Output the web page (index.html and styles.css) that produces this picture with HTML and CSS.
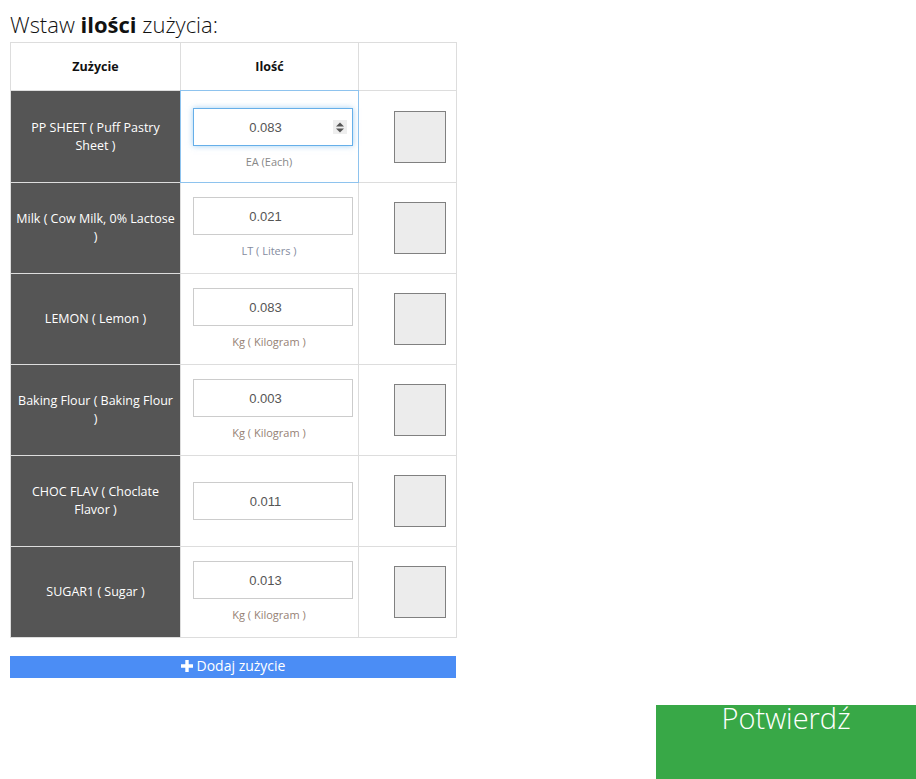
FILE: index.html
```html
<!DOCTYPE html>
<html lang="pl">
<head>
<meta charset="utf-8">
<title>Wstaw ilości zużycia</title>
<link rel="stylesheet" href="styles.css">
</head>
<body>
<div class="page">
  <div class="content">
    <h2 class="title">Wstaw <b>ilości</b> zużycia:</h2>
    <table class="usage">
      <thead>
        <tr>
          <th class="c-name">Zużycie</th>
          <th class="c-qty">Ilość</th>
          <th class="c-chk"></th>
        </tr>
      </thead>
      <tbody>
        <tr class="first">
          <td class="name">PP SHEET ( Puff Pastry Sheet )</td>
          <td class="qty focused">
            <div class="field focus"><input type="text" value="0.083"><span class="spin"><svg width="8" height="11" viewBox="0 0 8 11"><path d="M0 4.5 L4 0.5 L8 4.5 Z M0 6.5 L4 10.5 L8 6.5 Z" fill="#555"/></svg></span></div>
            <div class="unit u-ea">EA (Each)</div>
          </td>
          <td class="chk"><span class="box"></span></td>
        </tr>
        <tr>
          <td class="name">Milk ( Cow Milk, 0% Lactose )</td>
          <td class="qty">
            <div class="field"><input type="text" value="0.021"></div>
            <div class="unit u-lt">LT ( Liters )</div>
          </td>
          <td class="chk"><span class="box"></span></td>
        </tr>
        <tr>
          <td class="name">LEMON ( Lemon )</td>
          <td class="qty">
            <div class="field"><input type="text" value="0.083"></div>
            <div class="unit u-kg">Kg ( Kilogram )</div>
          </td>
          <td class="chk"><span class="box"></span></td>
        </tr>
        <tr>
          <td class="name">Baking Flour ( Baking Flour )</td>
          <td class="qty">
            <div class="field"><input type="text" value="0.003"></div>
            <div class="unit u-kg">Kg ( Kilogram )</div>
          </td>
          <td class="chk"><span class="box"></span></td>
        </tr>
        <tr>
          <td class="name">CHOC FLAV ( Choclate Flavor )</td>
          <td class="qty">
            <div class="field"><input type="text" value="0.011"></div>
          </td>
          <td class="chk"><span class="box"></span></td>
        </tr>
        <tr>
          <td class="name">SUGAR1 ( Sugar )</td>
          <td class="qty">
            <div class="field"><input type="text" value="0.013"></div>
            <div class="unit u-kg">Kg ( Kilogram )</div>
          </td>
          <td class="chk"><span class="box"></span></td>
        </tr>
      </tbody>
    </table>
    <button class="add" type="button"><svg class="plus" width="12" height="12" viewBox="0 0 12 12"><path d="M4.3 0 H7.7 V4.3 H12 V7.7 H7.7 V12 H4.3 V7.7 H0 V4.3 H4.3 Z" fill="#fff"/></svg>Dodaj zużycie</button>
  </div>
  <div class="actions">
    <button class="confirm" type="button">Potwierdź</button>
  </div>
</div>
</body>
</html>
```
FILE: styles.css
```css
* { box-sizing: border-box; }
html, body { margin: 0; padding: 0; background: #fff; }
body {
  font-family: "Open Sans", "Liberation Sans", sans-serif;
  color: #222;
  width: 916px;
  height: 779px;
  overflow: hidden;
}
.page { padding-top: 9px; }
.content { padding-left: 10px; width: 456px; }
.title {
  margin: 0 0 2px 0;
  font-size: 22px;
  font-weight: 300;
  line-height: 31px;
  color: #111;
}
.title b { font-weight: 700; }

.usage {
  border-collapse: collapse;
  width: 446px;
  table-layout: fixed;
}
.usage th, .usage td {
  border: 1px solid #ddd;
  padding: 0;
}
.c-name { width: 170px; }
.c-qty { width: 178px; }
.c-chk { width: 98px; }
.usage th {
  height: 48px;
  font-size: 12.5px;
  font-weight: 700;
  color: #111;
  text-align: center;
  vertical-align: middle;
}
.usage td { height: 91px; vertical-align: middle; }
.usage tr.first td { height: 92px; }
.name {
  background: #555555;
  color: #fff;
  font-size: 12.5px;
  line-height: 18px;
  text-align: center;
  padding: 0 4.5px !important;
}
.qty { text-align: center; }
.qty.focused {
  border: 1px double #8ec3ee !important;
  padding-top: 5px !important;
}
.field {
  position: relative;
  width: 160px;
  margin-left: 12px;
}
.field input {
  display: block;
  width: 160px;
  height: 38px;
  border: 1px solid #ccc;
  background: #fff;
  padding: 0 27px 0 12px;
  text-align: center;
  font-family: "Liberation Sans", Arial, sans-serif;
  font-size: 13px;
  color: #555;
  outline: none;
}
.field.focus input {
  border-color: #66afe9;
  box-shadow: 0 0 6px rgba(102, 175, 233, 0.6);
}
.spin {
  position: absolute;
  right: 6px;
  top: 12px;
  width: 14px;
  height: 14px;
  background: #eee;
  display: flex;
  align-items: center;
  justify-content: center;
}
.unit {
  margin-top: 8px;
  font-size: 11px;
  line-height: 16px;
  margin-left: -1px;
}
.u-ea { color: #888; }
.u-lt { color: #858ca0; }
.u-kg { color: #958174; }
.chk { text-align: left; padding-left: 35px !important; }
.box {
  display: block;
  width: 52px;
  height: 52px;
  background: #ececec;
  border: 1px solid #808080;
}
.add {
  display: flex;
  align-items: center;
  justify-content: center;
  gap: 4px;
  margin-top: 18px;
  width: 446px;
  height: 22px;
  border: 0;
  padding: 0 0 3px 0;
  background: #4b8df5;
  color: #fff;
  font-family: "Open Sans", sans-serif;
  font-size: 14px;
  line-height: 18px;
}
.plus { margin-top: 1px; }
.actions {
  display: flex;
  justify-content: flex-end;
  margin-top: 27px;
}
.confirm {
  width: 260px;
  height: 90px;
  border: 0;
  padding: 0;
  background: #38a847;
  color: #fff;
  font-family: "Open Sans", sans-serif;
  font-weight: 300;
  font-size: 29px;
  line-height: 26px;
  text-align: center;
  display: flex;
  justify-content: center;
  align-items: flex-start;
}
```
